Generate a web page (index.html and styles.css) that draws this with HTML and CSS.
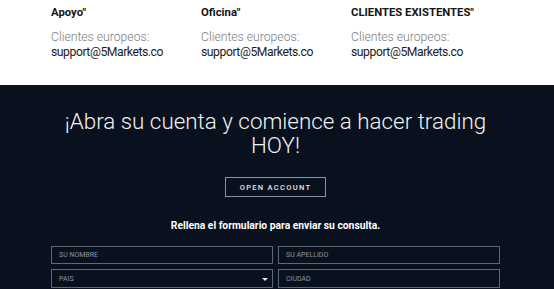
FILE: index.html
```html
<!DOCTYPE html>
<html lang="es">
<head>
<meta charset="utf-8">
<link rel="stylesheet" href="styles.css">
</head>
<body>
<section class="contacts">
  <div class="col">
    <h4>Apoyo"</h4>
    <p class="muted">Clientes europeos:</p>
    <p class="mail">support@5Markets.co</p>
  </div>
  <div class="col">
    <h4>Oficina"</h4>
    <p class="muted">Clientes europeos:</p>
    <p class="mail">support@5Markets.co</p>
  </div>
  <div class="col">
    <h4>CLIENTES EXISTENTES"</h4>
    <p class="muted">Clientes europeos:</p>
    <p class="mail">support@5Markets.co</p>
  </div>
</section>
<section class="cta">
  <h2>¡Abra su cuenta y comience a hacer trading<br>HOY!</h2>
  <a class="btn" href="#">OPEN ACCOUNT</a>
  <p class="lead">Rellena el formulario para enviar su consulta.</p>
  <form class="form">
    <div class="field">SU NOMBRE</div>
    <div class="field">SU APELLIDO</div>
    <div class="field select">PAIS<span class="caret"></span></div>
    <div class="field">CIUDAD</div>
  </form>
</section>
</body>
</html>
```
FILE: styles.css
```css
html, body { margin: 0; padding: 0; }
body { font-family: Roboto, "Liberation Sans", sans-serif; background: #08111d; overflow: hidden; }
.contacts { background: #fff; height: 85px; box-sizing: border-box; padding: 6px 0 0 51px; display: flex; }
.col { width: 150px; }
.col h4 { margin: 0 0 10px; font-size: 11.3px; font-weight: 700; color: #151515; line-height: 14px; }
.col p { margin: 0; font-size: 12.2px; line-height: 15px; }
.muted { color: #7c7c7c; font-weight: 300; }
.mail { color: #1c1c1c; letter-spacing: -0.45px; }
.cta { display: flex; flex-direction: column; align-items: center; padding-top: 24px; width: 551px; }
.cta h2 { margin: 0; font-weight: 300; font-size: 22.4px; line-height: 24px; color: #f2f2f2; text-align: center; }
.btn { margin-top: 20px; width: 101px; height: 20px; box-sizing: border-box; border: 1px solid #8c939c; color: #e6e6e6; font-size: 7.5px; letter-spacing: 1.3px; font-weight: 500; display: flex; align-items: center; justify-content: center; text-decoration: none; }
.lead { margin: 22px 0 0; color: #fff; font-size: 10.3px; font-weight: 700; line-height: 14px; }
.form { margin-top: 13px; display: grid; grid-template-columns: 222px 222px; gap: 5px; align-self: flex-start; margin-left: 51px; }
.field { height: 18px; box-sizing: border-box; border: 1px solid #5f6772; color: #8f96a0; font-size: 7px; display: flex; align-items: center; padding-left: 7px; position: relative; }
.field:nth-child(n+3) { height: 19px; }
.caret { position: absolute; right: 4px; top: 8px; border-left: 3px solid transparent; border-right: 3px solid transparent; border-top: 3px solid #e6e6e6; }
```
